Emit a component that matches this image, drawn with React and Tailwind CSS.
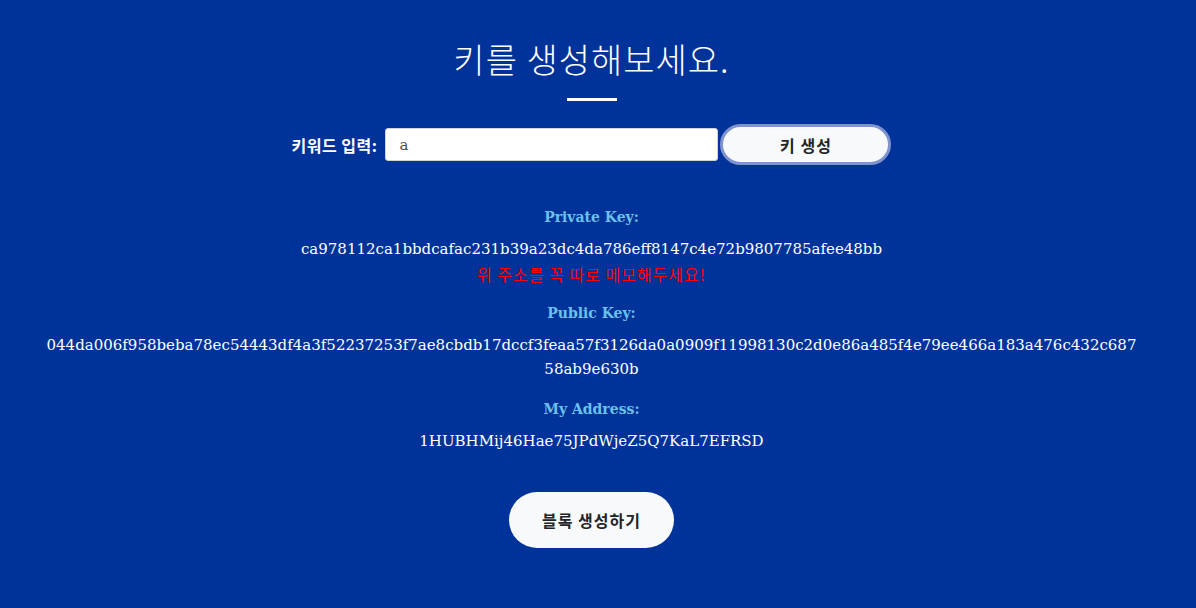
export default function App() {
  const privateKey = 'ca978112ca1bbdcafac231b39a23dc4da786eff8147c4e72b9807785afee48bb'
  const publicKey =
    '044da006f958beba78ec54443df4a3f52237253f7ae8cbdb17dccf3feaa57f3126da0a0909f11998130c2d0e86a485f4e79ee466a183a476c432c68758ab9e630b'
  const address = '1HUBHMij46Hae75JPdWjeZ5Q7KaL7EFRSD'

  const serif = "font-['DejaVu_Serif','Noto_Sans_CJK_KR',serif]"
  const sans = "font-['Noto_Sans_CJK_KR','Noto_Sans',sans-serif]"

  return (
    <div className={`min-h-screen bg-[#003399] text-white ${serif} flex flex-col items-center pr-[13px]`}>
      {/* Title */}
      <h1 className={`mt-[39px] text-[34px] leading-[40px] font-light tracking-[1px] ${sans}`}>키를 생성해보세요.</h1>
      <div className="mt-[19px] w-[50px] h-[3px] bg-white"></div>

      {/* Keyword input row */}
      <div className="mt-[23px] flex items-center">
        <label className={`text-[16px] font-bold tracking-[0.5px] mr-[8px] ${sans}`}>키워드 입력:</label>
        <input
          type="text"
          defaultValue="a"
          className="w-[333px] h-[33px] rounded-[3px] bg-white border border-[#ced4da] px-[13px] text-[15px] text-[#495057] outline-none"
        />
        <button
          className={`ml-[2px] w-[171px] h-[41px] rounded-full bg-[#f8f9fa] border-[3px] border-[#7f93cf] text-[16px] font-semibold tracking-[1px] text-[#212529] ${sans}`}
        >
          키 생성
        </button>
      </div>

      {/* Keys */}
      <div className="mt-[40px] flex flex-col items-center text-center text-[15px] leading-[24px]">
        <div className="font-bold text-[14px] text-[#6cc0ec]">Private Key:</div>
        <div className="mt-[8px]">{privateKey}</div>
        <div className={`mt-[1px] text-[#ff0000] text-[16px] tracking-[1px] ${sans}`}>위 주소를 꼭 따로 메모해두세요!</div>

        <div className="mt-[15px] font-bold text-[14px] text-[#6cc0ec]">Public Key:</div>
        <div className="mt-[8px] w-[1098px] break-all">{publicKey}</div>

        <div className="mt-[16px] font-bold text-[14px] text-[#6cc0ec]">My Address:</div>
        <div className="mt-[8px]">{address}</div>
      </div>

      <button
        className={`mt-[39px] w-[165px] h-[56px] rounded-full bg-[#f8f9fa] text-[16px] font-semibold tracking-[1px] text-[#212529] ${sans}`}
      >
        블록 생성하기
      </button>
    </div>
  )
}
